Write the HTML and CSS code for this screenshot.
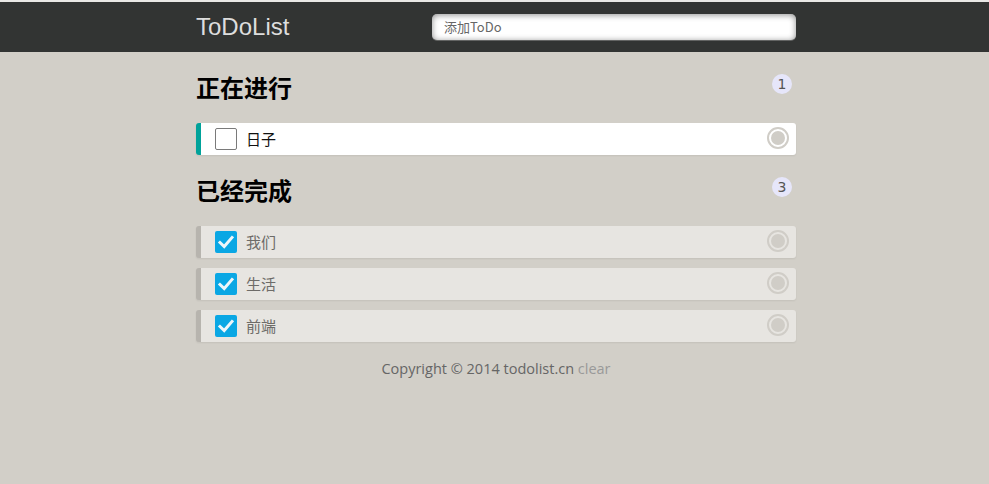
FILE: index.html
```
<!DOCTYPE html>
<html lang="zh-CN">
<head>
<meta charset="utf-8">
<title>ToDoList</title>
<link rel="stylesheet" href="styles.css">
</head>
<body>
<div class="topline"></div>
<header class="header">
  <div class="wrap header-inner">
    <div class="logo">ToDoList</div>
    <div class="add-input">添加ToDo</div>
  </div>
</header>
<main class="wrap">
  <div class="group-head">
    <h2>正在进行</h2>
    <span class="count">1</span>
  </div>
  <ol class="list">
    <li class="item">
      <span class="box"></span>
      <p class="text">日子</p>
      <span class="del"></span>
    </li>
  </ol>
  <div class="group-head">
    <h2>已经完成</h2>
    <span class="count">3</span>
  </div>
  <ul class="list">
    <li class="item done">
      <span class="box checked"><svg viewBox="0 0 22 22" width="22" height="22"><path d="M5 11.5 L9.2 15.5 L17 6.5" fill="none" stroke="#eef6fa" stroke-width="3" stroke-linecap="square"/></svg></span>
      <p class="text">我们</p>
      <span class="del"></span>
    </li>
    <li class="item done">
      <span class="box checked"><svg viewBox="0 0 22 22" width="22" height="22"><path d="M5 11.5 L9.2 15.5 L17 6.5" fill="none" stroke="#eef6fa" stroke-width="3" stroke-linecap="square"/></svg></span>
      <p class="text">生活</p>
      <span class="del"></span>
    </li>
    <li class="item done">
      <span class="box checked"><svg viewBox="0 0 22 22" width="22" height="22"><path d="M5 11.5 L9.2 15.5 L17 6.5" fill="none" stroke="#eef6fa" stroke-width="3" stroke-linecap="square"/></svg></span>
      <p class="text">前端</p>
      <span class="del"></span>
    </li>
  </ul>
  <footer class="footer">Copyright © 2014 todolist.cn <a class="clear">clear</a></footer>
</main>
</body>
</html>
```

FILE: styles.css
```
html, body {
  margin: 0;
  padding: 0;
}
body {
  background: #d2cfc8;
  font-family: "Noto Sans CJK SC", "Noto Sans", sans-serif;
  font-size: 16px;
  height: 484px;
  padding-left: 3px;
  box-sizing: border-box;
}
.topline {
  height: 2px;
  background: #e9e8e6;
  margin-left: -3px;
}
.header {
  height: 50px;
  background: #323433;
  margin-left: -3px;
  padding-left: 3px;
}
.wrap {
  width: 600px;
  margin: 0 auto;
}
.header-inner {
  display: flex;
  justify-content: space-between;
  align-items: flex-start;
}
.logo {
  font-family: "Liberation Sans", Arial, sans-serif;
  font-size: 24px;
  color: #dddddd;
  line-height: 50px;
}
.add-input {
  width: 364px;
  height: 26px;
  margin-top: 12px;
  padding-left: 12px;
  box-sizing: border-box;
  background: #fff;
  border-radius: 5px;
  box-shadow: 0 1px 0 rgba(255,255,255,0.24), 0 1px 6px rgba(0,0,0,0.45) inset;
  font-size: 13px;
  line-height: 26px;
  color: #666;
}
.group-head {
  display: flex;
  justify-content: space-between;
  align-items: flex-start;
  margin-top: 20px;
  height: 40px;
}
h2 {
  margin: 0;
  font-size: 24px;
  font-weight: bold;
  line-height: 30px;
  color: #000;
}
.count {
  margin-top: 2px;
  margin-right: 4px;
  width: 20px;
  height: 20px;
  border-radius: 10px;
  background: #e6e6fa;
  color: #555;
  font-family: "DejaVu Sans", sans-serif;
  font-size: 14px;
  line-height: 21px;
  text-align: center;
}
.list {
  margin: 0;
  padding: 0;
  list-style: none;
  margin-top: 11px;
}
.item {
  height: 32px;
  display: flex;
  align-items: center;
  background: #fff;
  border-left: 5px solid #00a29a;
  border-radius: 3px;
  margin-bottom: 10px;
  padding-left: 14px;
  padding-right: 7px;
  box-shadow: 0 1px 2px rgba(0,0,0,0.07);
}
.item.done {
  background: #e7e5e1;
  border-left-color: #b7b4ae;
}
.box {
  width: 22px;
  height: 22px;
  box-sizing: border-box;
  border: 1px solid #7a7a7a;
  border-radius: 2px;
  background: #fff;
  flex: none;
}
.box.checked {
  border: none;
  background: #0aa7e4;
}
.box svg {
  display: block;
}
.text {
  margin: 0 0 0 9px;
  flex: 1;
  font-size: 15px;
  color: #111;
  line-height: 32px;
}
.done .text {
  color: #6d6b68;
}
.del {
  width: 22px;
  height: 22px;
  box-sizing: border-box;
  border-radius: 50%;
  border: 2px solid #d0cdc7;
  padding: 2px;
  background: #d0cdc7;
  background-clip: content-box;
  flex: none;
  margin-top: -2px;
}
.footer {
  text-align: center;
  color: #666;
  font-family: "Open Sans", "Noto Sans", sans-serif;
  font-size: 14.5px;
  margin-top: 17px;
}
.clear {
  color: #999;
}
```
